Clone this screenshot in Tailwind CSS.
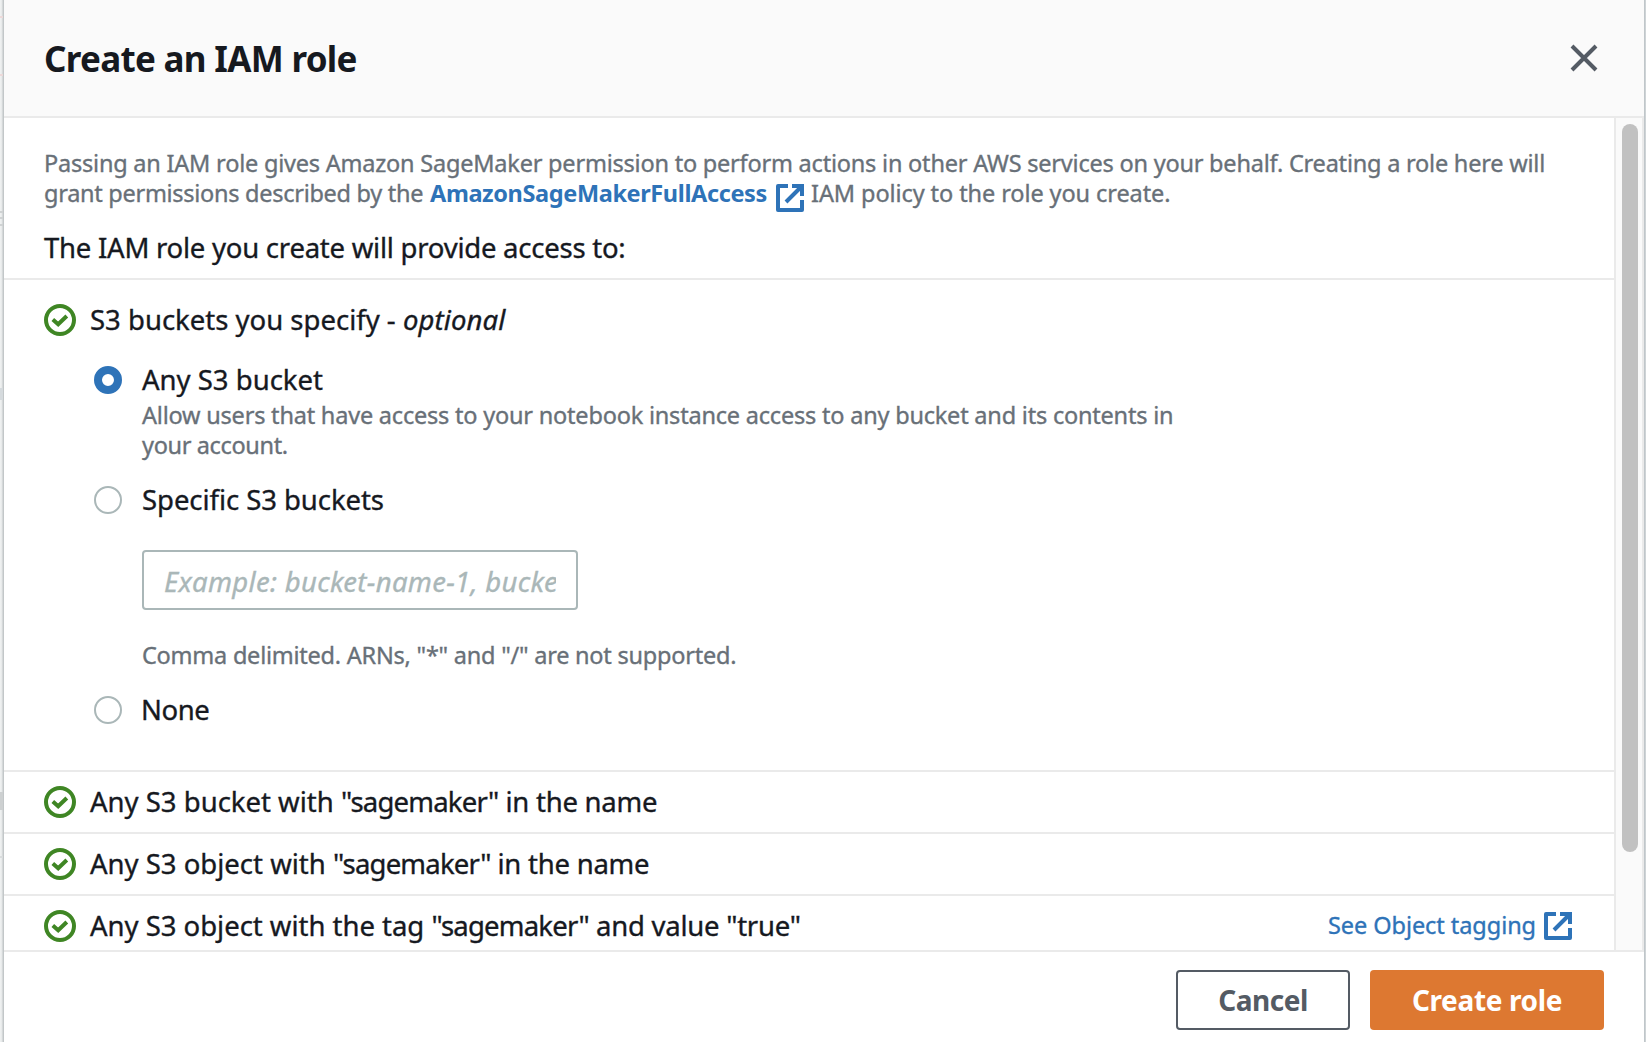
<!DOCTYPE html>
<html lang="en">
<head>
<meta charset="utf-8">
<title>Create an IAM role</title>
<script src="https://cdn.jsdelivr.net/npm/@tailwindcss/browser@4"></script>
</head>
<body class="w-[1646px] h-[1042px] overflow-hidden bg-[#eceeef] font-['Noto_Sans',sans-serif] text-[#16191f]">
<svg class="hidden">
  <symbol id="ok" viewBox="0 0 32 32"><circle cx="16" cy="16" r="14" fill="none" stroke="#3f8624" stroke-width="4"/><path d="M8.8 15.4l5.4 4.8 8.6-8.2" fill="none" stroke="#3f8624" stroke-width="4"/></symbol>
  <symbol id="ext" viewBox="0 0 28 28"><path d="M12 2H2v24h24V16" fill="none" stroke="#2e73b8" stroke-width="4" stroke-linejoin="round"/><path d="M16 2h10v10M26 2L10 18" fill="none" stroke="#2e73b8" stroke-width="4"/></symbol>
</svg>
<div class="flex h-full">
  <!-- edge of the page behind the dialog -->
  <div class="w-1 shrink-0 relative overflow-hidden bg-linear-to-r from-[#eef0f0] from-30% to-[#b9bec0]">
    <div class="absolute left-0 top-4 w-[3px] h-[2px] bg-[#ecd9d9]"></div>
    <div class="absolute left-0 top-[74px] w-[3px] h-[2px] bg-[#ecd9d9]"></div>
    <div class="absolute left-0 top-[211px] w-[3px] h-[2px] bg-[#cfd2d3]"></div>
    <div class="absolute left-0 top-[217px] w-[3px] h-[2px] bg-[#cfd2d3]"></div>
    <div class="absolute left-0 top-[224px] w-[3px] h-[2px] bg-[#cfd2d3]"></div>
    <div class="absolute left-0 top-[388px] w-[3px] h-3 bg-[#d5dadd]"></div>
    <div class="absolute left-0 top-[792px] w-[3px] h-[18px] bg-[#cdd0d1]"></div>
    <div class="absolute left-0 top-[856px] w-[3px] h-[2px] bg-[#d9dcdd]"></div>
  </div>
  <div class="w-[1640px] shrink-0 flex flex-col bg-white">
    <header class="h-[118px] shrink-0 flex justify-between bg-[#fafafa] border-b-2 border-[#eaeaea] pl-10 pr-[46px] pt-[38px]">
      <h1 class="pt-px text-[35px] leading-[40px] font-bold tracking-[-0.7px]">Create an IAM role</h1>
      <svg class="w-7 h-7 mt-[6px]" viewBox="0 0 28 28"><path d="M2 2l24 24M26 2L2 26" stroke="#545b64" stroke-width="4"/></svg>
    </header>
    <div class="h-[832px] shrink-0 flex overflow-hidden">
      <main class="w-[1610px] shrink-0 overflow-hidden text-[27.5px] leading-[40px] whitespace-nowrap [-webkit-text-stroke:0.35px]">
        <section class="h-[162px] border-b-2 border-[#eaeaea] pl-[38px] pt-[30px]">
          <div class="text-[23.5px] leading-[30px] text-[#687078]">
            <div class="pl-[2px] tracking-[-0.212px]">Passing an IAM role gives Amazon SageMaker permission to perform actions in other AWS services on your behalf. Creating a role here will</div>
            <div class="flex h-[30px] pl-[2px]">
              <span class="w-[386px] tracking-[-0.28px]">grant permissions described by the</span>
              <b class="w-[346px] text-[#2e73b8] tracking-[-0.38px] [-webkit-text-stroke:0px]">AmazonSageMakerFullAccess</b>
              <svg class="w-7 h-7 mt-[6px] shrink-0"><use href="#ext"/></svg>
              <span class="ml-[7px] tracking-[-0.09px]">IAM policy to the role you create.</span>
            </div>
          </div>
          <div class="mt-5 pl-[2px] tracking-[-0.24px]">The IAM role you create will provide access to:</div>
        </section>
        <section class="h-[492px] border-b-2 border-[#eaeaea] pl-10 pt-5">
          <div class="flex items-center"><svg class="w-8 h-8 mr-[14px]"><use href="#ok"/></svg><span>S3 buckets you specify - <i class="tracking-[0.1px]">optional</i></span></div>
          <div class="pl-[50px]">
            <div class="mt-5 flex items-center"><span class="w-7 h-7 rounded-full border-8 border-[#2e73b8] mr-5"></span><span>Any S3 bucket</span></div>
            <div class="pl-12 text-[23.5px] leading-[30px] text-[#687078]"><div class="tracking-[-0.205px]">Allow users that have access to your notebook instance access to any bucket and its contents in</div><div class="tracking-[-0.35px]">your account.</div></div>
            <div class="mt-5 flex items-center"><span class="w-7 h-7 rounded-full border-2 border-[#aab7b8] mr-5"></span><span class="tracking-[-0.06px]">Specific S3 buckets</span></div>
            <div class="mt-[30px] ml-12 w-[436px] h-[60px] rounded-[4px] border-2 border-[#aab7b8] px-5 pt-[10px]"><div class="overflow-hidden italic text-[#aab7b8] tracking-[0.3px]">Example: bucket-name-1, bucket-name-2</div></div>
            <div class="mt-[30px] pl-12 text-[23.5px] leading-[30px] text-[#687078] tracking-[-0.235px]">Comma delimited. ARNs, "*" and "/" are not supported.</div>
            <div class="mt-5 flex items-center"><span class="w-7 h-7 rounded-full border-2 border-[#aab7b8] mr-[19px]"></span><span class="tracking-[-0.4px]">None</span></div>
          </div>
        </section>
        <div class="h-[62px] border-b-2 border-[#eaeaea] flex items-center pl-10"><svg class="w-8 h-8 mr-[14px]"><use href="#ok"/></svg><span class="tracking-[-0.24px]"><span class="tracking-[0px]">Any S3 bucket with </span><span class="tracking-[-0.8px]">"sagemaker"</span> in the name</span></div>
        <div class="h-[62px] border-b-2 border-[#eaeaea] flex items-center pl-10"><svg class="w-8 h-8 mr-[14px]"><use href="#ok"/></svg><span class="tracking-[-0.24px]"><span class="tracking-[0px]">Any S3 object with </span><span class="tracking-[-0.8px]">"sagemaker"</span> in the name</span></div>
        <div class="h-[62px] border-b-2 border-[#eaeaea] flex items-center pl-10 pr-[42px]"><svg class="w-8 h-8 mr-[14px]"><use href="#ok"/></svg><span class="tracking-[-0.24px]"><span class="tracking-[-0.02px]">Any S3 object with the tag </span><span class="tracking-[-0.8px]">"sagemaker"</span> and value "true"</span>
          <a class="ml-auto flex items-center text-[23.5px] text-[#2e73b8] tracking-[-0.06px]"><span class="pb-[2px] mr-2">See Object tagging</span><svg class="w-7 h-7"><use href="#ext"/></svg></a></div>
      </main>
      <div class="w-[30px] shrink-0 bg-[#fafafa] border-x-2 border-[#eaeaea] pt-[6px] pl-[6px]"><div class="w-4 h-[728px] rounded-full bg-[#c1c1c1]"></div></div>
    </div>
    <footer class="grow border-t-2 border-[#eaeaea] flex justify-end gap-5 pr-10 pt-[18px] text-[28px] font-bold">
      <button class="w-[174px] h-[60px] rounded-[4px] border-2 border-[#545b64] text-[#545b64] tracking-[-0.5px] pb-px">Cancel</button>
      <button class="w-[234px] h-[60px] rounded-[4px] bg-[#dd7831] text-white tracking-[-0.35px] pb-px">Create role</button>
    </footer>
  </div>
  <div class="w-[2px] shrink-0 bg-linear-to-r from-[#b9c0c4] to-[#d5dadc]"></div>
</div>
</body>
</html>
